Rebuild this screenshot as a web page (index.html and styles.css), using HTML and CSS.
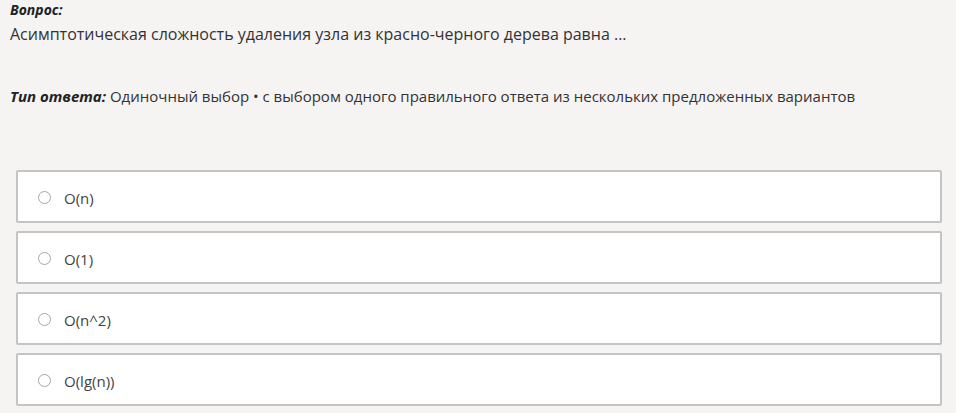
FILE: index.html
```html
<!DOCTYPE html>
<html>
<head>
  <title>Вопрос</title>
  <link rel="stylesheet" href="styles.css">
</head>
<body>

<div class="question">
  <p class="label">Вопрос:</p>
  <p class="text">Асимптотическая сложность удаления узла из красно-черного дерева равна ...</p>
</div>

<p class="answer-type"><span class="label">Тип ответа:</span> Одиночный выбор • с выбором одного правильного ответа из нескольких предложенных вариантов</p>

<div class="options">
  <label class="option"><input type="radio" name="answer"> O(n)</label>
  <label class="option"><input type="radio" name="answer"> O(1)</label>
  <label class="option"><input type="radio" name="answer"> O(n^2)</label>
  <label class="option"><input type="radio" name="answer"> O(lg(n))</label>
</div>

</body>
</html>
```

FILE: styles.css
```css
body {
  font-family: 'Open Sans', 'Noto Sans', sans-serif;
  font-size: 15px;
  color: #333;
  background: #f5f4f3;
  margin: 0;
  padding: 0 14px 0 10px;
}

p {
  margin: 0;
}

.label {
  font-weight: bold;
  font-style: italic;
  color: #222;
}

.question .label {
  font-size: 14px;
  line-height: 20px;
}

.question .text {
  font-size: 16px;
  line-height: 28px;
}

.answer-type {
  margin-top: 37px;
  line-height: 22px;
}

.options {
  margin-top: 63px;
  margin-left: 6px;
  display: flex;
  flex-direction: column;
  gap: 8px;
}

.option {
  display: flex;
  align-items: center;
  gap: 13px;
  height: 53px;
  box-sizing: border-box;
  padding-left: 20px;
  padding-top: 2px;
  background: white;
  border: 2px solid #c4c4c4;
  border-radius: 2px;
  color: #444;
}

.option input {
  margin: 0;
  width: 13px;
  height: 13px;
  appearance: none;
  border: 1.5px solid #a6a6a6;
  border-radius: 50%;
  background: white;
}
```
